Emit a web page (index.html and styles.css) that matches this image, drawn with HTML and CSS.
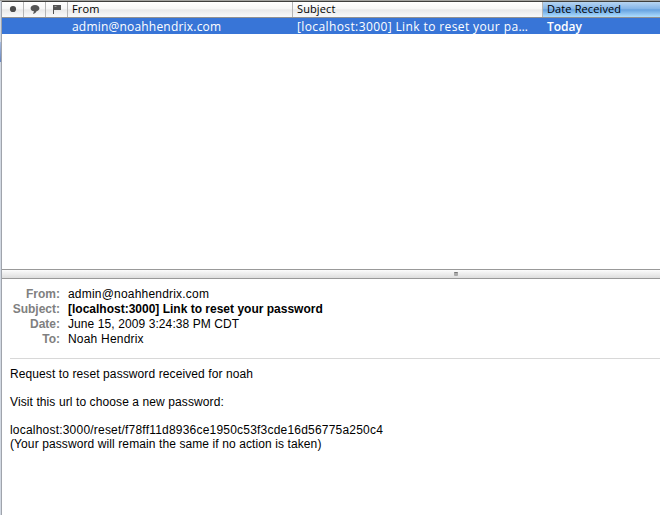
FILE: index.html
```
<!DOCTYPE html>
<html lang="en">
<head>
<meta charset="utf-8">
<title>Mail</title>
<link rel="stylesheet" href="styles.css">
</head>
<body>
<div class="window">
  <div class="edge"><div class="edge-mark"></div></div>
  <main class="main">
    <div class="list">
      <div class="columns head">
        <div class="cell icon"><svg width="22" height="15"><circle cx="11" cy="7" r="3.1" fill="#4c4c4c"/></svg></div>
        <div class="cell icon"><svg width="22" height="15"><path d="M11 3C8.3 3 6.6 4.4 6.6 6.2C6.6 8 8.2 9.1 10 9.3L9 12C11 11.5 12 10.4 12.6 9.2C14.4 8.8 15.4 7.6 15.4 6.2C15.4 4.4 13.7 3 11 3Z" fill="#555"/></svg></div>
        <div class="cell icon"><svg width="22" height="15"><path d="M7 3H15V8H8V12H7Z" fill="#555"/><path d="M8.5 4.5H10.5" stroke="#999"/></svg></div>
        <div class="cell"><span class="h-from">From</span></div>
        <div class="cell"><span class="h-subject">Subject</span></div>
        <div class="cell sorted"><span class="h-date">Date Received</span></div>
      </div>
      <div class="columns row">
        <div></div><div></div><div></div>
        <div class="cell"><span class="r-from">admin@noahhendrix.com</span></div>
        <div class="cell"><span class="r-subject">[localhost:3000] Link to reset your pa…</span></div>
        <div class="cell"><span class="r-date">Today</span></div>
      </div>
    </div>
    <div class="splitter"><div class="grip"></div></div>
    <article class="message">
      <dl class="fields">
        <dt>From:</dt><dd><span class="m-from">admin@noahhendrix.com</span></dd>
        <dt>Subject:</dt><dd><b class="m-subject">[localhost:3000] Link to reset your password</b></dd>
        <dt>Date:</dt><dd><span class="m-date">June 15, 2009 3:24:38 PM CDT</span></dd>
        <dt>To:</dt><dd><span class="m-to">Noah Hendrix</span></dd>
      </dl>
      <div class="body">
        <p><span class="b-request">Request to reset password received for noah</span></p>
        <p><span class="b-visit">Visit this url to choose a new password:</span></p>
        <p><span class="b-link">localhost:3000/reset/f78ff11d8936ce1950c53f3cde16d56775a250c4</span><br>
        <span class="b-note">(Your password will remain the same if no action is taken)</span></p>
      </div>
    </article>
  </main>
</div>
</body>
</html>
```
FILE: styles.css
```
* { box-sizing: border-box; }
body {
  margin: 0;
  width: 660px;
  height: 515px;
  overflow: hidden;
  background: #fff;
  color: #000;
  font: 12px/14px "Liberation Sans", Arial, sans-serif;
}
.window {
  display: flex;
  height: 515px;
  border-top: 1px solid #a3a3a0;
}
.edge {
  width: 2px;
  background: #d1d8e2;
  border-right: 1px solid #a0a4ac;
  padding-top: 41px;
}
.edge-mark { width: 1px; height: 20px; background: linear-gradient(#a8bce0, #6685bf); }
.main { flex: 1; min-width: 0; display: flex; flex-direction: column; }
.list {
  height: 268px;
  border-top: 1px solid #3e3e3c;
  font-family: "Open Sans", "Noto Sans", sans-serif;
}
.columns {
  display: grid;
  grid-template-columns: 22px 22px 22px 225px 250px 1fr;
  height: 16px;
}
.cell { padding-left: 4px; white-space: nowrap; overflow: hidden; }
.head {
  font-size: 11px;
  font-weight: 500;
  line-height: 14px;
  border-bottom: 1px solid #929292;
  background: linear-gradient(#fff 0, #f6f6f6 45%, #e9e9e9 52%, #fafafa 100%);
}
.head .cell { border-right: 1px solid #b5b5b5; }
.head .icon { padding: 0; }
.icon svg { display: block; }
.head .sorted {
  border-right: 0;
  background: linear-gradient(#b7d5f2 0, #85b5e8 45%, #65a1e0 52%, #b0dfff 100%);
}
.row { color: #fff; background: #3875d7; font-size: 12px; font-weight: 500; line-height: 17px; }
.h-from, .h-subject, .h-date { letter-spacing: 0.12px; }
.r-from { letter-spacing: 0.2px; }
.r-subject { letter-spacing: 0.39px; }
.r-date { font-weight: 600; }
.m-from { letter-spacing: 0.2px; }
.m-date { letter-spacing: 0.09px; }
.m-to { letter-spacing: 0.2px; }
.b-request, .b-visit, .b-note { letter-spacing: 0.1px; }
.b-link { letter-spacing: 0.205px; }
.splitter {
  height: 10px;
  border: 1px solid #999;
  border-width: 1px 0;
  background: linear-gradient(#fcfcfc, #dedede);
  display: flex;
  align-items: center;
  padding-left: 452px;
}
.grip {
  width: 4px;
  height: 4px;
  border-radius: 1px;
  border-top: 1px solid #777;
  background: #aaa;
}
.message { padding: 8px 0 0 8px; }
.fields {
  display: grid;
  grid-template-columns: 50px 1fr;
  column-gap: 8px;
  grid-auto-rows: 15px;
  line-height: 15px;
  margin: 0;
  height: 72px;
  border-bottom: 1px solid #d8d8d8;
}
.fields dt { color: #808080; font-weight: 700; text-align: right; white-space: nowrap; }
.fields dd { margin: 0; white-space: nowrap; }
.body { padding-top: 8px; white-space: nowrap; }
.body p { margin: 0 0 14px; }
```
